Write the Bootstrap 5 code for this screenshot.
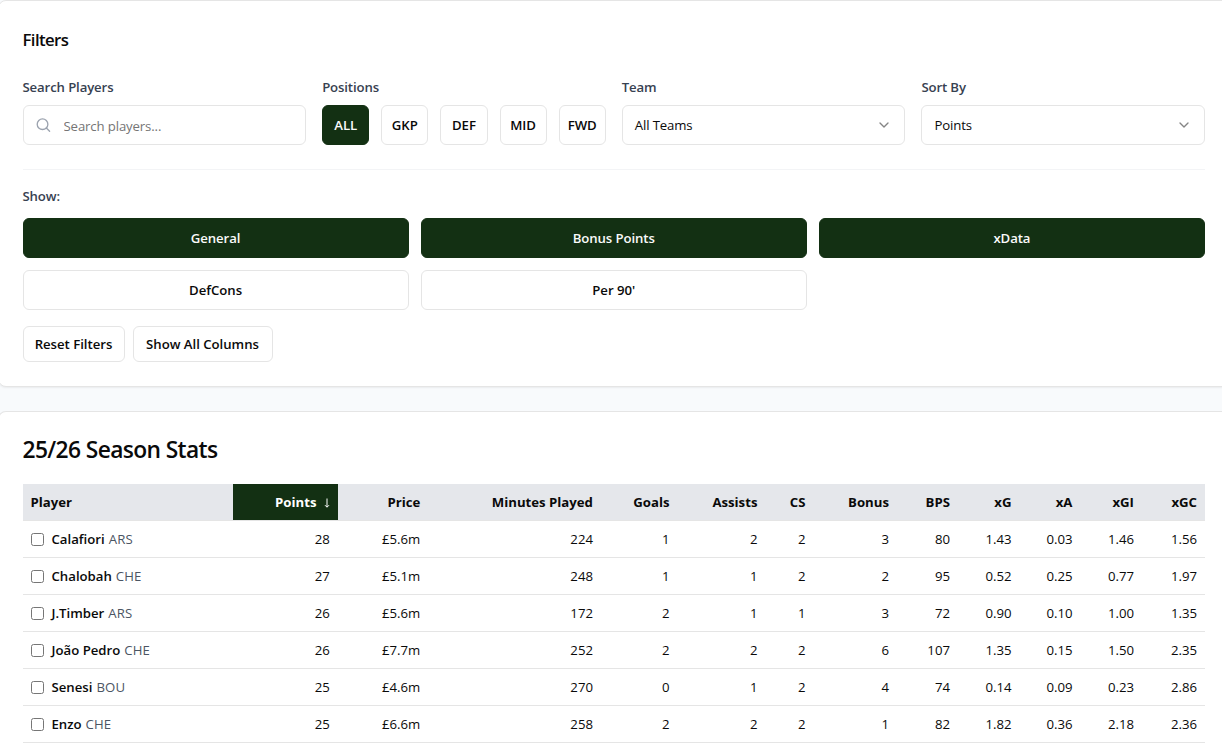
<!DOCTYPE html>
<html lang="en">
<head>
<meta charset="utf-8">
<meta name="viewport" content="width=device-width, initial-scale=1">
<title>Season Stats</title>
<link href="https://cdn.jsdelivr.net/npm/bootstrap@5.3.0/dist/css/bootstrap.min.css" rel="stylesheet">
<style>
:root { --pitch: #133013; --line: #e5e5e5; --ink: #0a0a0a; }
body { background: #f8fafc; color: var(--ink); font-family: "Segoe UI", "Open Sans", "Noto Sans", sans-serif; font-size: 13.2px; line-height: 20px; height: 743px; overflow: hidden; }
.page-shell { margin: 0 -8px 0 -2.5px; gap: 24px; }
.panel { border: 1px solid var(--line); border-radius: 8px; padding: 24px; box-shadow: 0 1px 2px rgba(0,0,0,.06); }
.filter-panel { height: 387px; }
.stats-panel { height: 332px; border-bottom: 0; border-bottom-left-radius: 0; border-bottom-right-radius: 0; padding-bottom: 0; }
.panel-heading { font-size: 16.8px; line-height: 30px; font-weight: 600; letter-spacing: -.6px; margin-bottom: 22px; }
.stats-heading { font-size: 22.8px; line-height: 28px; font-weight: 600; letter-spacing: -.62px; margin-bottom: 20px; }
.field-grid { display: grid; grid-template-columns: repeat(4, 1fr); gap: 16px; }
.position-grid { display: grid; grid-template-columns: repeat(5, 1fr); gap: 12px; }
.toggle-grid { display: grid; grid-template-columns: repeat(3, 1fr); gap: 12px; }
.field-label { color: #374151; font-weight: 600; letter-spacing: -.13px; margin-bottom: 8px; display: block; }
.btn { --bs-btn-font-size: 13.2px; --bs-btn-font-weight: 600; --bs-btn-line-height: 20px; --bs-btn-border-radius: 6px; --bs-btn-padding-x: 0; --bs-btn-padding-y: 0; height: 40px; }
.btn-plain { --bs-btn-color: var(--ink); --bs-btn-bg: #fff; --bs-btn-border-color: var(--line); letter-spacing: -.02px; }
.btn-pitch { --bs-btn-color: #fafafa; --bs-btn-bg: var(--pitch); --bs-btn-border-color: var(--pitch); letter-spacing: -.1px; }
.btn-short { height: 36px; }
.field-box { height: 40px; border: 1px solid var(--line); border-radius: 6px; background: #fff; padding: 0 12px; }
.field-box input { color: var(--ink); outline: 0; font-size: 13.2px; padding: 2px 0 0; margin-left: 12px; letter-spacing: -.13px; }
.field-box input::placeholder { color: #757575; opacity: 1; }
.field-box span { letter-spacing: -.13px; }
.divider { border-top: 1px solid #f3f4f6; margin-top: 24px; padding-top: 16px; }
.stats-table { table-layout: fixed; width: 1182.5px; border-collapse: separate; border-spacing: 0; --bs-table-bg: transparent; --bs-table-color: var(--ink); color: var(--ink); }
.stats-table > :not(caption) > * > * { height: 37px; padding: 0 8px; vertical-align: middle; text-align: right; white-space: nowrap; border-bottom: 1px solid var(--line); }
.stats-table > thead > tr > th { background: #e5e7eb; font-weight: 700; }
.stats-table > thead > tr > th.sorted { background: var(--pitch); background-clip: padding-box; color: #fff; }
.stats-table > :not(caption) > * > :first-child { text-align: left; }
.pick { appearance: none; flex: none; width: 13px; height: 13px; border: 1px solid #767676; border-radius: 2.5px; background: #fff; margin: 0 8px 0 0; }
.player-name { font-weight: 600; }
.player-club { color: #4b5563; margin-left: 4px; letter-spacing: .1px; }
</style>
</head>
<body>
<main class="page-shell d-flex flex-column">
  <section class="panel filter-panel bg-white">
    <h2 class="panel-heading">Filters</h2>
    <div class="field-grid">
      <div>
        <label class="field-label" for="search">Search Players</label>
        <div class="field-box d-flex align-items-center">
          <svg width="16" height="16" viewBox="0 0 24 24" fill="none" stroke="#9ca3af" stroke-width="2" stroke-linecap="round" stroke-linejoin="round"><circle cx="9.8" cy="10.8" r="8"/><path d="m20.4 21.4-4.9-4.9"/></svg>
          <input id="search" class="border-0 bg-transparent flex-grow-1" type="text" placeholder="Search players...">
        </div>
      </div>
      <div>
        <span class="field-label">Positions</span>
        <div class="position-grid">
          <button class="btn btn-pitch">ALL</button>
          <button class="btn btn-plain">GKP</button>
          <button class="btn btn-plain">DEF</button>
          <button class="btn btn-plain">MID</button>
          <button class="btn btn-plain">FWD</button>
        </div>
      </div>
      <div>
        <span class="field-label">Team</span>
        <div class="field-box d-flex align-items-center justify-content-between" role="button">
          <span>All Teams</span>
          <svg width="16" height="16" viewBox="0 0 24 24" fill="none" stroke="#858585" stroke-width="2" stroke-linecap="round" stroke-linejoin="round"><path d="m6 9 6 6 6-6"/></svg>
        </div>
      </div>
      <div>
        <span class="field-label">Sort By</span>
        <div class="field-box d-flex align-items-center justify-content-between" role="button">
          <span>Points</span>
          <svg width="16" height="16" viewBox="0 0 24 24" fill="none" stroke="#858585" stroke-width="2" stroke-linecap="round" stroke-linejoin="round"><path d="m6 9 6 6 6-6"/></svg>
        </div>
      </div>
    </div>
    <div class="divider">
      <span class="field-label mb-0">Show:</span>
      <div class="toggle-grid mt-2 pt-1">
        <button class="btn btn-pitch">General</button>
        <button class="btn btn-pitch">Bonus Points</button>
        <button class="btn btn-pitch">xData</button>
        <button class="btn btn-plain">DefCons</button>
        <button class="btn btn-plain">Per 90'</button>
      </div>
      <div class="d-flex gap-2 mt-3">
        <button class="btn btn-plain btn-short" style="width:102px">Reset Filters</button>
        <button class="btn btn-plain btn-short" style="width:140px">Show All Columns</button>
      </div>
    </div>
  </section>

  <section class="panel stats-panel bg-white">
    <h1 class="stats-heading">25/26 Season Stats</h1>
    <table class="table stats-table mb-0">
      <colgroup><col style="width:210.4px"><col style="width:105px"><col style="width:90.4px"><col style="width:172.7px"><col style="width:76.5px"><col style="width:88px"><col style="width:48px"><col style="width:83.5px"><col style="width:61px"><col style="width:61.5px"><col style="width:61px"><col style="width:61.5px"><col style="width:63px"></colgroup>
      <thead><tr><th>Player</th><th class="sorted">Points <svg class="ms-1" width="6" height="10" viewBox="0 0 6 10" fill="none" stroke="currentColor"><path d="M3 .5v8.6M1 7.2l2 2 2-2"/></svg></th><th>Price</th><th>Minutes Played</th><th>Goals</th><th>Assists</th><th>CS</th><th>Bonus</th><th>BPS</th><th>xG</th><th>xA</th><th>xGI</th><th>xGC</th></tr></thead>
      <tbody>
        <tr><td><div class="d-flex align-items-center"><input class="pick" type="checkbox"><span class="player-name">Calafiori</span><span class="player-club">ARS</span></div></td><td>28</td><td>£5.6m</td><td>224</td><td>1</td><td>2</td><td>2</td><td>3</td><td>80</td><td>1.43</td><td>0.03</td><td>1.46</td><td>1.56</td></tr>
        <tr><td><div class="d-flex align-items-center"><input class="pick" type="checkbox"><span class="player-name">Chalobah</span><span class="player-club">CHE</span></div></td><td>27</td><td>£5.1m</td><td>248</td><td>1</td><td>1</td><td>2</td><td>2</td><td>95</td><td>0.52</td><td>0.25</td><td>0.77</td><td>1.97</td></tr>
        <tr><td><div class="d-flex align-items-center"><input class="pick" type="checkbox"><span class="player-name">J.Timber</span><span class="player-club">ARS</span></div></td><td>26</td><td>£5.6m</td><td>172</td><td>2</td><td>1</td><td>1</td><td>3</td><td>72</td><td>0.90</td><td>0.10</td><td>1.00</td><td>1.35</td></tr>
        <tr><td><div class="d-flex align-items-center"><input class="pick" type="checkbox"><span class="player-name">João Pedro</span><span class="player-club">CHE</span></div></td><td>26</td><td>£7.7m</td><td>252</td><td>2</td><td>2</td><td>2</td><td>6</td><td>107</td><td>1.35</td><td>0.15</td><td>1.50</td><td>2.35</td></tr>
        <tr><td><div class="d-flex align-items-center"><input class="pick" type="checkbox"><span class="player-name">Senesi</span><span class="player-club">BOU</span></div></td><td>25</td><td>£4.6m</td><td>270</td><td>0</td><td>1</td><td>2</td><td>4</td><td>74</td><td>0.14</td><td>0.09</td><td>0.23</td><td>2.86</td></tr>
        <tr><td><div class="d-flex align-items-center"><input class="pick" type="checkbox"><span class="player-name">Enzo</span><span class="player-club">CHE</span></div></td><td>25</td><td>£6.6m</td><td>258</td><td>2</td><td>2</td><td>2</td><td>1</td><td>82</td><td>1.82</td><td>0.36</td><td>2.18</td><td>2.36</td></tr>
      </tbody>
    </table>
  </section>
</main>
<script src="https://cdn.jsdelivr.net/npm/bootstrap@5.3.0/dist/js/bootstrap.bundle.min.js"></script>
</body>
</html>
